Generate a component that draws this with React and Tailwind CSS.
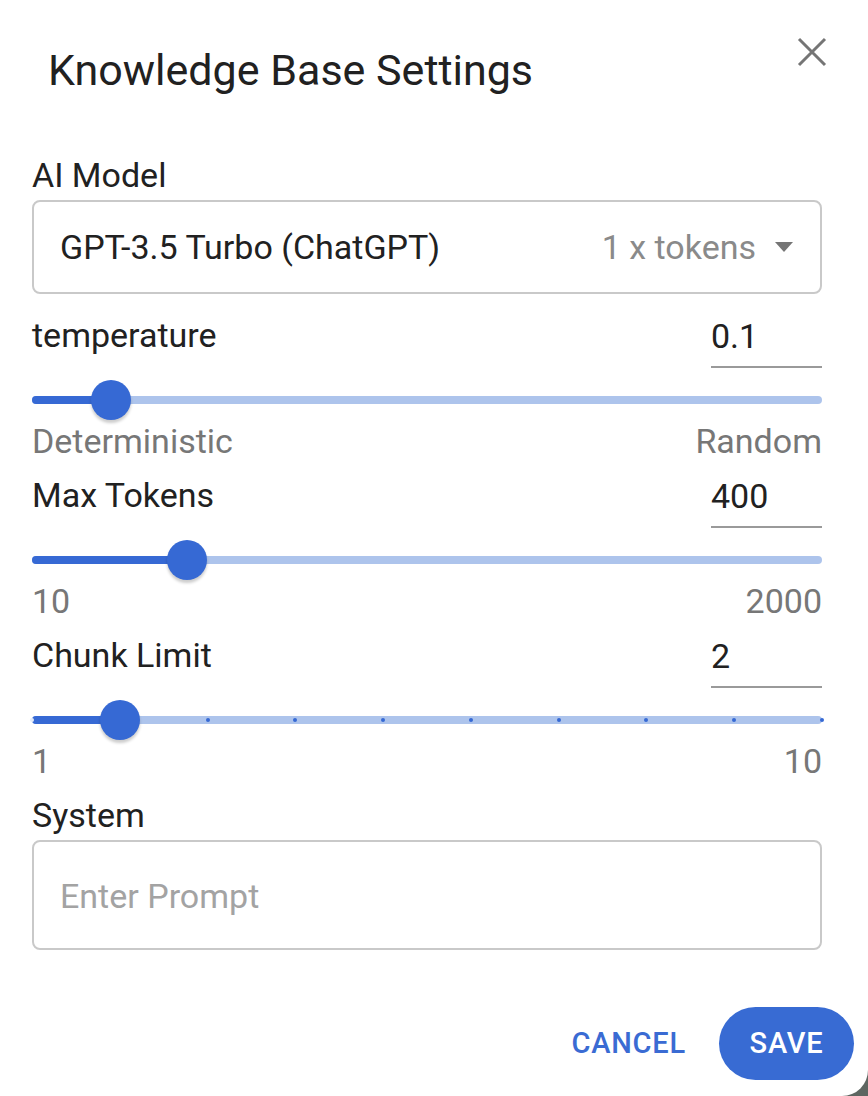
import { useState } from 'react'

const font = { fontFamily: 'Roboto, "Liberation Sans", sans-serif' }

function CloseIcon() {
  return (
    <svg width="32" height="32" viewBox="0 0 32 32" className="text-[#757575]">
      <path d="M3 3 L29 29 M29 3 L3 29" stroke="currentColor" strokeWidth="3" strokeLinecap="butt" fill="none" />
    </svg>
  )
}

// track is 790px wide; value is a 0..1 fraction
function Slider({ value, steps }) {
  const pct = value * 100
  return (
    <div className="relative h-[64px] flex items-center">
      <div className="relative w-full h-[8px] rounded-full bg-[#adc4ec]">
        <div className="absolute left-0 top-0 h-full rounded-full bg-[#3669d4]" style={{ width: `${pct}%` }} />
        {steps &&
          Array.from({ length: steps }).map((_, i) => {
            const p = (i / (steps - 1)) * 100
            return (
              <div
                key={i}
                className={`absolute top-1/2 w-[4px] h-[4px] -mt-[2px] -ml-[2px] rounded-full ${p <= pct ? 'bg-[#e3ebfa]' : 'bg-[#3669d4]'}`}
                style={{ left: `${p}%` }}
              />
            )
          })}
        <div
          className="absolute top-1/2 w-[40px] h-[40px] -mt-[20px] -ml-[20px] rounded-full bg-[#3669d4] shadow-[0_3px_3px_rgba(0,0,0,0.2)]"
          style={{ left: `${pct}%` }}
        />
      </div>
    </div>
  )
}

function Section({ label, value, min, max, frac, steps }) {
  return (
    <div className="flex flex-col">
      <div className="h-[72px] flex items-end justify-between">
        <span className="text-[34px] leading-[30px] mb-[18px] text-[#212121]">{label}</span>
        <div className="w-[111px] border-b-2 border-[#9a9a9a] pb-[15px] text-[34px] leading-[30px] text-[#212121]">{value}</div>
      </div>
      <Slider value={frac} steps={steps} />
      <div className="h-[24px] flex justify-between text-[34px] leading-[18px] text-[#777]">
        <span>{min}</span>
        <span>{max}</span>
      </div>
    </div>
  )
}

export default function App() {
  const [prompt, setPrompt] = useState('')
  return (
    <div className="w-[868px] h-[1096px] bg-[#5d6661] overflow-hidden" style={font}>
      <div className="w-[868px] h-[1096px] bg-white rounded-br-[26px] flex flex-col">
        <div className="h-[150px] flex items-start justify-between pl-[48px] pr-[40px]">
          <h2 className="mt-[44px] text-[43px] leading-[52px] text-[#212121] font-normal">Knowledge Base Settings</h2>
          <button className="mt-[36px]"><CloseIcon /></button>
        </div>

        <div className="px-[32px] w-[854px] flex flex-col">
          <div className="h-[50px] flex items-center text-[34px] leading-[30px] text-[#212121]">AI Model</div>
          <div className="h-[94px] border-2 border-[#c9c9c9] rounded-[8px] flex items-center pl-[26px] pr-[26px] text-[34px]">
            <span className="flex-1 text-[#212121]">GPT-3.5 Turbo (ChatGPT)</span>
            <span className="text-[#8a8a8a]">1 x tokens</span>
            <svg width="20" height="12" viewBox="0 0 20 12" className="ml-[18px]">
              <path d="M1 1 L19 1 L10 11 Z" fill="#757575" />
            </svg>
          </div>

          <div className="mt-[2px] flex flex-col">
            <Section label="temperature" value="0.1" min="Deterministic" max="Random" frac={0.1} />
            <Section label="Max Tokens" value="400" min="10" max="2000" frac={390 / 1990} />
            <Section label="Chunk Limit" value="2" min="1" max="10" frac={1 / 9} steps={10} />
          </div>

          <div className="h-[64px] flex items-end pb-[10px] text-[34px] leading-[30px] text-[#212121]">System</div>
          <textarea
            value={prompt}
            onChange={e => setPrompt(e.target.value)}
            placeholder="Enter Prompt"
            className="h-[110px] border-2 border-[#c9c9c9] rounded-[8px] px-[26px] pt-[34px] text-[34px] leading-[40px] text-[#212121] placeholder:text-[#a3a3a3] resize-none outline-none"
          />
        </div>

        <div className="mt-[57px] flex justify-end items-center pr-[14px]">
          <button className="mr-[33px] text-[29px] font-medium tracking-[0.8px] text-[#3a6bd3]">CANCEL</button>
          <button className="w-[135px] h-[73px] rounded-full bg-[#386bd3] text-white text-[29px] font-medium tracking-[0.8px]">SAVE</button>
        </div>
      </div>
    </div>
  )
}
